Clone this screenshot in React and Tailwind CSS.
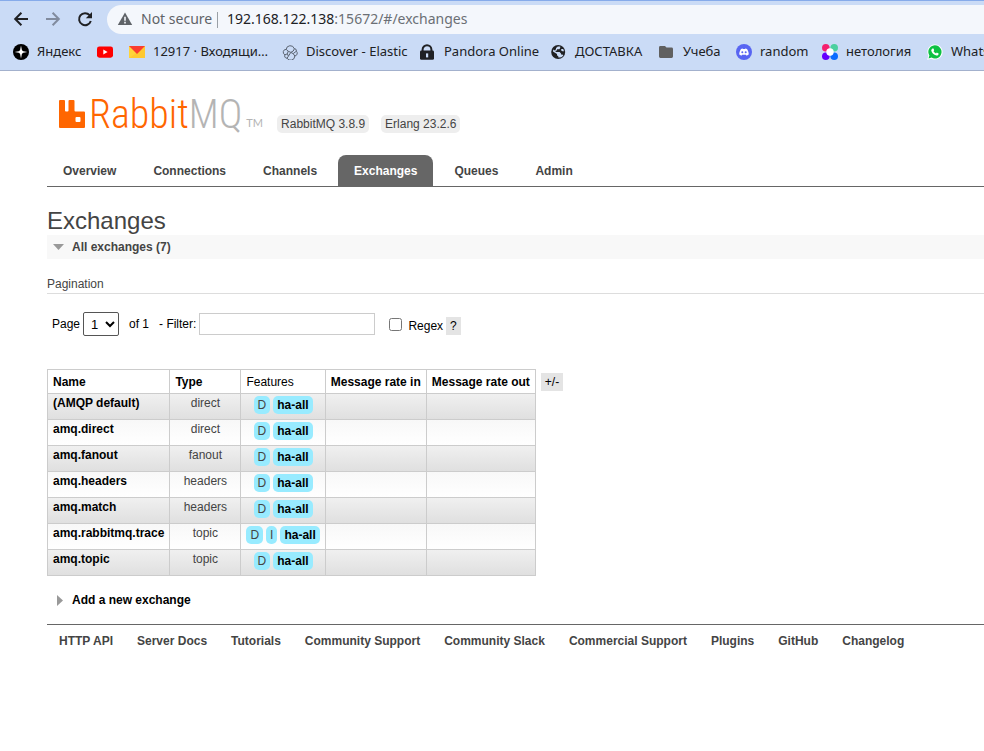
import React from "react";

const bookmarks = [
  { label: "Яндекс", icon: YandexIcon, width: "w-[68px]" },
  { label: "", icon: YoutubeIcon, width: "w-4" },
  { label: "12917 · Входящи…", icon: MailIcon, width: "w-[137px]" },
  { label: "Discover - Elastic", icon: ElasticIcon, width: "w-[122px]" },
  { label: "Pandora Online", icon: LockIcon, width: "w-[115px]" },
  { label: "ДОСТАВКА", icon: GlobeIcon, width: "w-[92px]" },
  { label: "Учеба", icon: FolderIcon, width: "w-[61px]" },
  { label: "random", icon: DiscordIcon, width: "w-[70px]" },
  { label: "нетология", icon: NetologyIcon, width: "w-[89px]" },
  { label: "WhatsApp", icon: WhatsappIcon, width: "w-[90px]" },
];

const tabs = ["Overview", "Connections", "Channels", "Exchanges", "Queues", "Admin"];

const exchanges = [
  { name: "(AMQP default)", type: "direct", internal: false },
  { name: "amq.direct", type: "direct", internal: false },
  { name: "amq.fanout", type: "fanout", internal: false },
  { name: "amq.headers", type: "headers", internal: false },
  { name: "amq.match", type: "headers", internal: false },
  { name: "amq.rabbitmq.trace", type: "topic", internal: true },
  { name: "amq.topic", type: "topic", internal: false },
];

const footerLinks = [
  "HTTP API",
  "Server Docs",
  "Tutorials",
  "Community Support",
  "Community Slack",
  "Commercial Support",
  "Plugins",
  "GitHub",
  "Changelog",
];

function YandexIcon() {
  return (
    <svg className="size-4 shrink-0" viewBox="0 0 16 16" aria-hidden="true">
      <circle cx="8" cy="8" r="8" fill="#000" />
      <path d="M8 1.6 9.1 6.9 14.4 8 9.1 9.1 8 14.4 6.9 9.1 1.6 8 6.9 6.9Z" fill="#fff" />
      <circle cx="8" cy="8" r="2" fill="#fff" />
    </svg>
  );
}

function YoutubeIcon() {
  return (
    <svg className="size-4 shrink-0" viewBox="0 0 16 16" aria-hidden="true">
      <rect x="0" y="2.4" width="16" height="11.3" rx="2.4" fill="#f00" />
      <path d="M6.3 5.6 10.6 8 6.3 10.4Z" fill="#fff" />
    </svg>
  );
}

function MailIcon() {
  return (
    <svg className="size-4 shrink-0" viewBox="0 0 16 16" aria-hidden="true">
      <rect x="0" y="2" width="16" height="12" fill="#ffd43a" />
      <path d="M16 2.5V14H0.5Z" fill="#ffc931" />
      <path d="M0 2H16L8 10Z" fill="#fa3c2f" />
    </svg>
  );
}

function ElasticIcon() {
  return (
    <svg className="size-4 shrink-0" viewBox="0 0 16 16" fill="none" stroke="#5b6472" strokeWidth="1" aria-hidden="true">
      <path d="M4.2 5.4A4.1 4.1 0 0 1 12.2 4.6 4.2 4.2 0 0 1 11.2 7L8.8 8.4 6.2 7.2Z" />
      <path d="M4.2 5.4A2.8 2.8 0 0 0 3 10.8L5.4 9.8 6.2 7.2" />
      <path d="M3 10.8A2.2 2.2 0 0 0 5 14.2L6.4 12.2 5.4 9.8" />
      <path d="M5 14.2A4.2 4.2 0 0 0 12.8 12L11.2 9.6 8.8 8.4 6.4 12.2" />
      <path d="M12.2 4.6A2.3 2.3 0 0 1 14.4 7.2 2.8 2.8 0 0 1 12.8 12" />
      <path d="M14.4 7.2 11.2 9.6" />
    </svg>
  );
}

function LockIcon() {
  return (
    <svg className="size-4 shrink-0" viewBox="0 0 16 16" aria-hidden="true">
      <path d="M2.6 8V5.6A4.4 4.4 0 0 1 11.4 5.6V8" fill="none" stroke="#202124" strokeWidth="2" />
      <rect x="0" y="6.4" width="14" height="9.4" rx="1.4" fill="#202124" />
      <rect x="6" y="9.4" width="2.2" height="4" fill="#cadbf6" />
    </svg>
  );
}

function GlobeIcon() {
  return (
    <svg className="size-4 shrink-0" viewBox="0 0 16 16" aria-hidden="true">
      <circle cx="7.2" cy="8" r="7" fill="#202124" />
      <path d="M6.8 2.6H9.2V4L8.4 5.2H6V6.6H4.6V8H8.6L10 9.4V10.6H11.4L12.4 11.4A6 6 0 0 1 7.4 13.6V12.4L6 11.2V10L2 7.4A5.6 5.6 0 0 1 2.4 5.6L3.6 6.6 5 5.2V4Z" fill="#cadbf6" />
      <path d="M10.4 5H12.2L13 7.2H11.4L10 6.2Z" fill="#cadbf6" />
    </svg>
  );
}

function FolderIcon() {
  return (
    <svg className="size-4 shrink-0" viewBox="0 0 16 16" aria-hidden="true">
      <path d="M1.4 2H6L7.5 3.6H12.6A1.4 1.4 0 0 1 14 5V12.6A1.4 1.4 0 0 1 12.6 14H1.4A1.4 1.4 0 0 1 0 12.6V3.4A1.4 1.4 0 0 1 1.4 2Z" fill="#606060" />
    </svg>
  );
}

function DiscordIcon() {
  return (
    <svg className="size-4 shrink-0" viewBox="0 0 16 16" aria-hidden="true">
      <circle cx="8" cy="8" r="8" fill="#5865f2" />
      <path d="M5 4.9 6.6 4.4 7 5H9L9.4 4.4 11 4.9C12.3 6.8 12.9 8.8 12.7 10.6L10.6 11.7 10 10.8H6L5.4 11.7 3.3 10.6C3.1 8.8 3.7 6.8 5 4.9Z" fill="#fff" />
      <circle cx="6.3" cy="8.3" r="1" fill="#5865f2" />
      <circle cx="9.7" cy="8.3" r="1" fill="#5865f2" />
    </svg>
  );
}

function NetologyIcon() {
  return (
    <svg className="size-4 shrink-0" viewBox="0 0 16 16" aria-hidden="true">
      <circle cx="3.8" cy="3.8" r="3.8" fill="#f5206e" />
      <circle cx="12.2" cy="3.8" r="3.8" fill="#4bd0a0" />
      <circle cx="3.8" cy="12.2" r="3.8" fill="#6400ff" />
      <circle cx="12.2" cy="12.2" r="3.8" fill="#0a6cff" />
      <circle cx="8" cy="8" r="3.7" fill="#fff" />
    </svg>
  );
}

function WhatsappIcon() {
  return (
    <svg className="size-4 shrink-0" viewBox="0 0 16 16" aria-hidden="true">
      <path d="M0.2 15.8 1.4 11.8A7.6 7.6 0 1 1 4.4 14.7Z" fill="#fff" />
      <path d="M1.5 14.5 2.4 11.5A6.6 6.6 0 1 1 4.6 13.6Z" fill="#0dc143" />
      <path d="M5.6 4.4 6.5 4.5 7.2 6.3 6.5 7.2C7.1 8.3 7.9 9 9 9.5L9.8 8.6 11.6 9.4C11.7 10.9 10.5 11.6 9.4 11.4 6.7 10.8 4.8 8.9 4.3 6.7 4.2 5.7 4.8 4.7 5.6 4.4Z" fill="#fff" />
    </svg>
  );
}

function BrowserBar() {
  return (
    <header className="overflow-hidden border-t border-b border-t-[#86abea] border-b-[#a3b1cd] bg-[#cadbf6] font-['Noto_Sans',sans-serif] text-[#202124]">
      <div className="flex items-center pt-1">
        <div className="flex gap-4 pl-[13px]">
          <button type="button" aria-label="Back" className="size-4">
            <svg className="size-4" viewBox="0 0 16 16" fill="none" stroke="#202124" strokeWidth="2">
              <path d="M15 7H2.6M8.4 0.8 2.2 7 8.4 13.2" />
            </svg>
          </button>
          <button type="button" aria-label="Forward" className="size-4">
            <svg className="size-4" viewBox="0 0 16 16" fill="none" stroke="#818b9e" strokeWidth="2">
              <path d="M1 7H13.4M7.6 0.8 13.8 7 7.6 13.2" />
            </svg>
          </button>
          <button type="button" aria-label="Reload" className="size-4">
            <svg className="size-4" viewBox="0 0 16 16" fill="none" stroke="#202124" strokeWidth="2">
              <path d="M12.6 3.2A6 6 0 1 0 13.8 9" />
              <path d="M15 0V6.2H8.8Z" fill="#202124" stroke="none" />
            </svg>
          </button>
        </div>
        <div className="ml-3.5 flex h-[29px] flex-1 items-center rounded-l-full bg-[#f4f7fc] pl-2.5 text-sm leading-4">
          <svg className="size-4 shrink-0" viewBox="0 0 16 16" aria-hidden="true">
            <path d="M8 0.5 15.2 13H0.8Z" fill="#5f6368" />
            <path d="M7.2 4.8H8.8V8.8H7.2ZM7.2 9.8H8.8V11.4H7.2Z" fill="#f4f7fc" />
          </svg>
          <span className="w-[84px] pb-0.5 pl-2 whitespace-nowrap text-[#5f6368]">Not secure</span>
          <span className="h-4 w-px bg-[#9aa0a6]" />
          <span className="pb-0.5 pl-[9px] whitespace-nowrap text-[#6b6f75]">
            <span className="text-[#202124]">192.168.122.138</span>:15672/#/exchanges
          </span>
        </div>
      </div>
      <nav aria-label="Bookmarks" className="flex h-9 items-center gap-4 pl-[13px] text-[13px]">
        {bookmarks.map(({ label, icon: Icon, width }, i) => (
          <a key={i} href="#bookmark" aria-label={label || "YouTube"} className={`flex shrink-0 items-center gap-2 whitespace-nowrap ${width}`}>
            <Icon />
            {label && <span>{label}</span>}
          </a>
        ))}
      </nav>
    </header>
  );
}

function Logo() {
  return (
    <a href="#home" className="flex items-end pl-3">
      <svg className="mb-[5px] h-7 w-[26px]" viewBox="0 0 26 28" aria-hidden="true">
        <path
          fillRule="evenodd"
          d="M1 0H5Q6 0 6 1V10.5Q6 11.5 7 11.5H8.5Q9.5 11.5 9.5 10.5V1Q9.5 0 10.5 0H14.5Q15.5 0 15.5 1V10.5Q15.5 11.5 16.5 11.5H25Q26 11.5 26 12.5V27Q26 28 25 28H1Q0 28 0 27V1Q0 0 1 0ZM17.5 17Q16.5 17 16.5 18V21Q16.5 22 17.5 22H20.5Q21.5 22 21.5 21V18Q21.5 17 20.5 17Z"
          fill="#f60"
        />
      </svg>
      <span className="pl-1 font-['Roboto_Condensed','Open_Sans_Condensed',Roboto,sans-serif] text-[40px] leading-9 font-light text-[#f60]">
        Rabbit<span className="text-[#b4b4b4]">MQ</span>
      </span>
      <span className="pb-0.5 pl-1 font-['Lato',sans-serif] text-[11px] leading-4 text-[#b4b4b4]">TM</span>
    </a>
  );
}

function Tag({ children, bold }) {
  return (
    <span className={`rounded-[5px] bg-[#98ebff] px-1 py-0.5 leading-[14px] ${bold ? "font-bold text-black" : "text-[#444]"}`}>
      {children}
    </span>
  );
}

function ExchangeTable() {
  const head = "h-6 border border-[#ccc] px-[5px] text-left";
  const cell = "h-[26px] border border-[#ccc] px-[5px] pt-0.5 align-top leading-[14px]";
  return (
    <table className="border-collapse bg-white text-black">
      <thead>
        <tr>
          <th className={head}>Name</th>
          <th className={head}>Type</th>
          <th className={`${head} font-normal`}>Features</th>
          <th className={head}>Message rate in</th>
          <th className={head}>Message rate out</th>
        </tr>
      </thead>
      <tbody>
        {exchanges.map((x) => (
          <tr key={x.name} className="odd:bg-linear-to-b odd:from-[#f0f0f0] odd:to-[#dfdfdf] even:bg-linear-to-b even:from-[#f8f8f8] even:to-white">
            <td className={cell}>
              <a href="#exchange" className="font-bold">{x.name}</a>
            </td>
            <td className={`${cell} min-w-[71px] text-center text-[#444]`}>{x.type}</td>
            <td className={cell}>
              <div className="flex justify-center gap-[3px]">
                <Tag>D</Tag>
                {x.internal && <Tag>I</Tag>}
                <Tag bold>ha-all</Tag>
              </div>
            </td>
            <td className={cell} />
            <td className={cell} />
          </tr>
        ))}
      </tbody>
    </table>
  );
}

export default function App() {
  return (
    <div className="min-h-screen overflow-x-hidden bg-white font-['Liberation_Sans',Arial,sans-serif] text-xs text-[#444]">
      <BrowserBar />
      <div className="pl-[47px]">
        <div className="flex h-[62px] items-end">
          <Logo />
          <div className="flex gap-3 pl-3.5">
            <span className="rounded-[5px] bg-[#eee] px-1 py-0.5 leading-[14px]">RabbitMQ 3.8.9</span>
            <span className="rounded-[5px] bg-[#eee] px-1 py-0.5 leading-[14px]">Erlang 23.2.6</span>
          </div>
        </div>
        <nav aria-label="Sections" className="mt-[22px] flex gap-[5px] border-b border-[#666]">
          {tabs.map((tab) => (
            <a
              key={tab}
              href={`#${tab}`}
              className={`h-[31px] rounded-t-lg px-4 pt-2 font-bold leading-4 ${tab === "Exchanges" ? "bg-[#666] text-white" : ""}`}
            >
              {tab}
            </a>
          ))}
        </nav>
        <main>
          <h1 className="pt-5 text-2xl leading-7">Exchanges</h1>
          <h2 className="h-6 bg-[#f8f8f8] font-bold">
            <button type="button" className="flex h-6 items-center gap-2 pl-1.5">
              <svg className="h-1.5 w-[11px]" viewBox="0 0 11 6" aria-hidden="true">
                <path d="M0 0H11L5.5 6Z" fill="#999" />
              </svg>
              All exchanges (7)
            </button>
          </h2>
          <h3 className="mt-[17px] border-b border-[#ddd] pb-px leading-4">Pagination</h3>
          <div className="mt-[18px] flex items-center pl-[5px] text-black">
            <label htmlFor="page">Page</label>
            <select id="page" className="ml-[3px] h-6 w-9 rounded-[2px] border border-[#555] bg-white pl-[3px] text-[13px]">
              <option>1</option>
            </select>
            <span className="pl-2.5">of 1</span>
            <label htmlFor="filter" className="pl-2.5">- Filter:</label>
            <input id="filter" type="text" className="ml-[3px] h-[22px] w-44 border border-[#ccc]" />
            <input id="regex" type="checkbox" className="ml-3.5 size-[13px]" />
            <label htmlFor="regex" className="pt-1 pl-1.5">Regex</label>
            <button type="button" className="mt-1 ml-[3px] bg-[#e4e4e4] px-1 py-0.5 leading-[14px]">?</button>
          </div>
          <div className="mt-[33px] flex items-start gap-[5px]">
            <ExchangeTable />
            <button type="button" className="mt-1 bg-[#e4e4e4] px-1 py-0.5 leading-[14px] text-black">+/-</button>
          </div>
          <h2 className="mt-3 font-bold text-black">
            <button type="button" className="flex h-6 items-center gap-2 pl-2.5">
              <svg className="h-[11px] w-[7px]" viewBox="0 0 7 11" aria-hidden="true">
                <path d="M0 0L6 5.5L0 11Z" fill="#999" />
              </svg>
              Add a new exchange
            </button>
          </h2>
        </main>
        <footer className="mt-3 flex gap-6 border-t border-[#666] pt-2 pl-3 font-bold whitespace-nowrap">
          {footerLinks.map((link) => (
            <a key={link} href="#footer">{link}</a>
          ))}
        </footer>
      </div>
    </div>
  );
}
